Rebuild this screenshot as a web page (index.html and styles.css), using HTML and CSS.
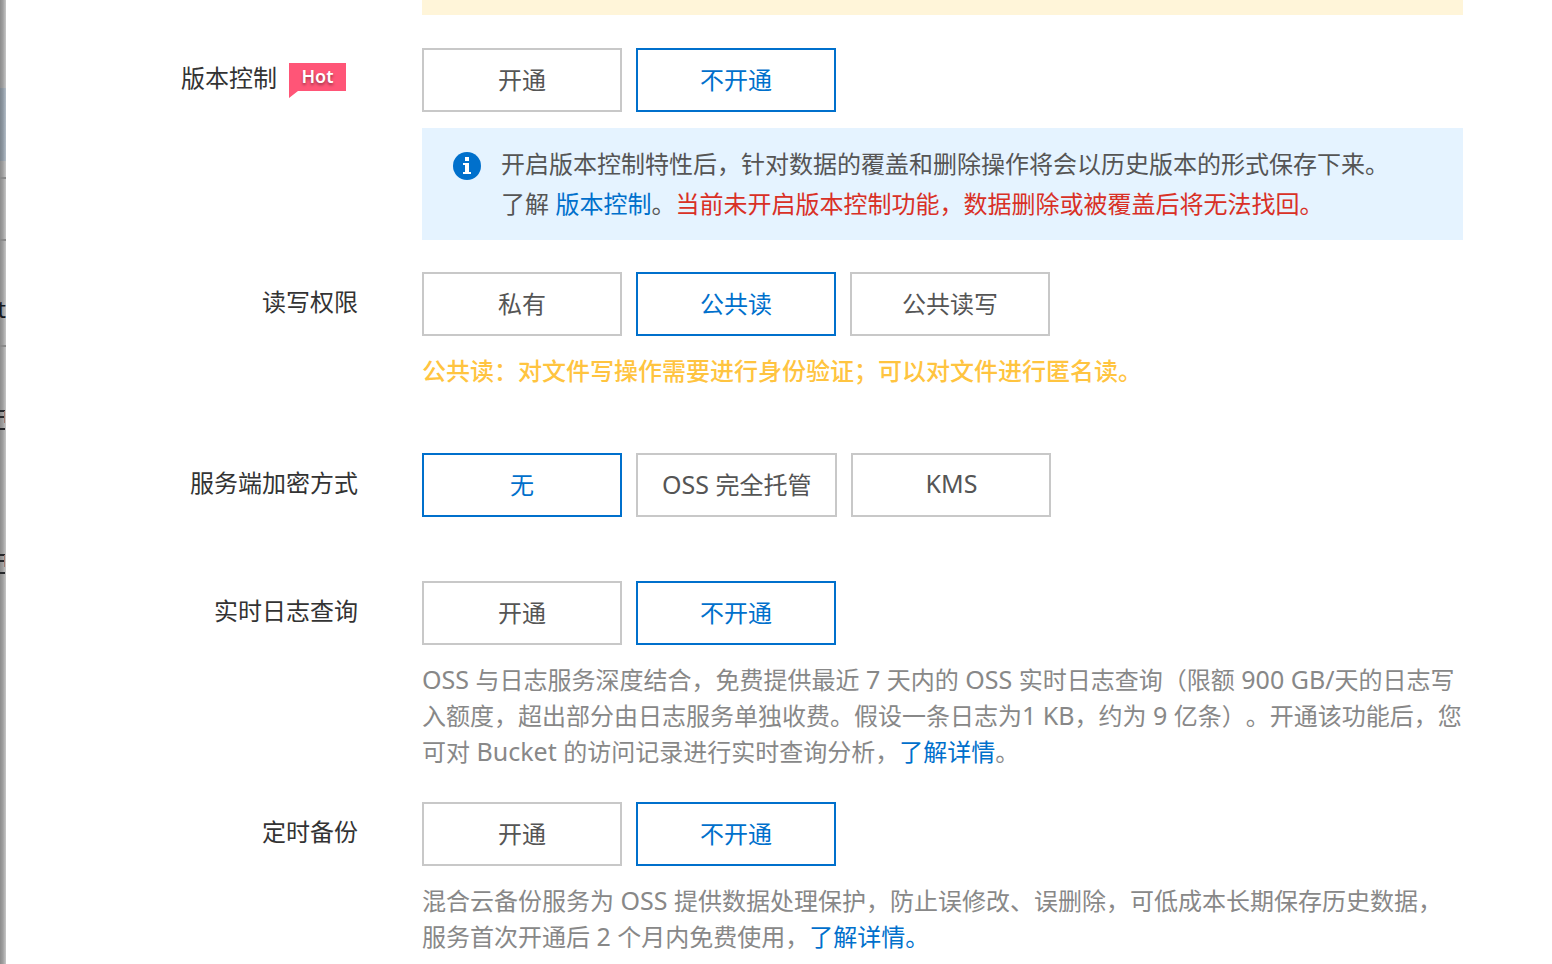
FILE: index.html
```
<!DOCTYPE html>
<html lang="zh-CN">
<head>
<meta charset="utf-8">
<title>创建 Bucket</title>
<link rel="stylesheet" href="styles.css">
</head>
<body>
<div class="backdrop" aria-hidden="true">
  <div class="backdrop-active"></div>
  <div class="backdrop-line"></div>
  <div class="backdrop-line backdrop-line-second"></div>
  <div class="backdrop-text">t</div>
  <div class="backdrop-line backdrop-line-third"></div>
  <svg class="backdrop-link" viewBox="0 0 6 22"><path d="M0 2H5M0 8H4M0 20H5" stroke="#26282c" stroke-width="2" fill="none"/><path d="M4.500 2V14" stroke="#a07a70" fill="none"/></svg>
  <svg class="backdrop-link backdrop-link-last" viewBox="0 0 6 22"><path d="M0 2H5M0 8H4M0 20H5" stroke="#26282c" stroke-width="2" fill="none"/><path d="M4.500 2V14" stroke="#a07a70" fill="none"/></svg>
</div>
<main class="drawer">
  <div class="warning"></div>

  <section class="field" role="group" aria-labelledby="l-version">
    <div class="label"><span id="l-version">版本控制</span><span class="hot"><svg class="hot-shape" viewBox="0 0 57 35" aria-hidden="true"><path d="M0 0H57V28H9L0 35Z" fill="#ff5577"/></svg><span class="hot-text">Hot</span></span></div>
    <div class="content">
      <div class="options">
        <button type="button" class="option">开通</button>
        <button type="button" class="option selected" aria-pressed="true">不开通</button>
      </div>
      <div class="notice">
        <svg class="info" viewBox="0 0 28 28" aria-hidden="true"><circle cx="14" cy="14" r="14" fill="#0070cc"/><path d="M12 5H16V9H12ZM10 11H16V20H18V22H10V20H12V13H10Z" fill="#fff"/></svg>
        <p class="notice-text">开启版本控制特性后，针对数据的覆盖和删除操作将会以历史版本的形式保存下来。<br>了解<span class="latin"> </span><a href="#">版本控制</a>。<span class="danger">当前未开启版本控制功能，数据删除或被覆盖后将无法找回。</span></p>
      </div>
    </div>
  </section>

  <section class="field field-loose" role="group" aria-labelledby="l-acl">
    <div class="label"><span id="l-acl">读写权限</span></div>
    <div class="content">
      <div class="options">
        <button type="button" class="option">私有</button>
        <button type="button" class="option selected" aria-pressed="true">公共读</button>
        <button type="button" class="option">公共读写</button>
      </div>
      <p class="hint hint-warn">公共读：对文件写操作需要进行身份验证；可以对文件进行匿名读。</p>
    </div>
  </section>

  <section class="field field-loose" role="group" aria-labelledby="l-enc">
    <div class="label"><span id="l-enc">服务端加密方式</span></div>
    <div class="content">
      <div class="options">
        <button type="button" class="option selected" aria-pressed="true">无</button>
        <button type="button" class="option"><span class="latin">OSS </span>完全托管</button>
        <button type="button" class="option"><span class="latin">KMS</span></button>
      </div>
    </div>
  </section>

  <section class="field" role="group" aria-labelledby="l-log">
    <div class="label"><span id="l-log">实时日志查询</span></div>
    <div class="content">
      <div class="options">
        <button type="button" class="option">开通</button>
        <button type="button" class="option selected" aria-pressed="true">不开通</button>
      </div>
      <p class="hint"><span class="latin">OSS </span>与日志服务深度结合，免费提供最近<span class="latin"> 7 </span>天内的<span class="latin"> OSS </span>实时日志查询（限额<span class="latin"> 900 GB/</span>天的日志写<br>入额度，超出部分由日志服务单独收费。假设一条日志为<span class="latin">1 KB</span>，约为<span class="latin"> 9 </span>亿条）。开通该功能后，您<br>可对<span class="latin"> Bucket </span>的访问记录进行实时查询分析，<a href="#">了解详情</a>。</p>
    </div>
  </section>

  <section class="field field-last" role="group" aria-labelledby="l-backup">
    <div class="label"><span id="l-backup">定时备份</span></div>
    <div class="content">
      <div class="options">
        <button type="button" class="option">开通</button>
        <button type="button" class="option selected" aria-pressed="true">不开通</button>
      </div>
      <p class="hint">混合云备份服务为<span class="latin"> OSS </span>提供数据处理保护，防止误修改、误删除，可低成本长期保存历史数据，<br>服务首次开通后<span class="latin"> 2 </span>个月内免费使用，<a href="#">了解详情。</a></p>
    </div>
  </section>
</main>
</body>
</html>
```
FILE: styles.css
```
* {
  box-sizing: border-box;
}

body {
  margin: 0;
  display: flex;
  min-height: 100vh;
  background: #fff;
  color: #333;
  font-family: "Noto Sans", "Noto Sans CJK SC", sans-serif;
  font-size: 24px;
  text-spacing-trim: space-all;
}

p {
  margin: 0;
}

a {
  color: #0070cc;
  text-decoration: none;
}

.latin {
  font-size: 25px;
  line-height: 1;
}

/* Sliver of the page behind the drawer */
.backdrop {
  flex: none;
  width: 6px;
  overflow: hidden;
  background: linear-gradient(to right, #8c8c8c, #a0a0a0 50%, #c8c8c8);
}

.backdrop-active {
  height: 73px;
  margin-top: 88px;
  background: linear-gradient(to right, #7c858e, #8e98a2 50%, #b4bec8);
}

.backdrop-line {
  height: 2px;
  margin-top: 16px;
  background: #8a8a8a;
}

.backdrop-line-second {
  margin-top: 60px;
}

.backdrop-line-third {
  margin-top: 24px;
}

.backdrop-text {
  display: flex;
  justify-content: flex-end;
  height: 24px;
  margin-top: 56px;
  color: #16181c;
  line-height: 24px;
}

.backdrop-link {
  display: block;
  width: 6px;
  height: 22px;
  margin-top: 62px;
}

.backdrop-link-last {
  margin-top: 122px;
}

.drawer {
  flex: 1;
  min-width: 0;
  padding-right: 89px;
}

.warning {
  height: 15px;
  margin: 0 0 33px 416px;
  background: #fff5d9;
}

.field {
  display: flex;
  gap: 64px;
  margin-bottom: 32px;
}

.field-loose {
  margin-bottom: 64px;
}

.field-last {
  margin-bottom: 0;
}

.label {
  flex: none;
  display: flex;
  justify-content: flex-end;
  align-items: center;
  width: 352px;
  height: 60px;
  line-height: 60px;
}

.content {
  flex: 1;
  min-width: 0;
}

.hot {
  display: grid;
  width: 57px;
  height: 35px;
  margin: 4px 12px 0;
}

.hot-shape,
.hot-text {
  grid-area: 1 / 1;
}

.hot-text {
  color: #fff;
  font-size: 18px;
  font-weight: 600;
  line-height: 27px;
  text-align: center;
  text-shadow: 0 2px 3px rgba(0, 0, 0, 0.4);
}

.options {
  display: flex;
  gap: 14px;
}

.option {
  min-width: 200px;
  height: 64px;
  padding: 0 24px 3px;
  border: 2px solid #c8c8c8;
  background: #fff;
  color: #555;
  font: inherit;
  white-space: nowrap;
}

.option.selected {
  border-color: #0070cc;
  color: #0070cc;
}

.notice {
  display: flex;
  gap: 20px;
  margin-top: 16px;
  padding: 16px 31px;
  background: #e5f3ff;
  color: #555;
  line-height: 40px;
}

.info {
  flex: none;
  width: 28px;
  height: 28px;
  margin-top: 8px;
}

.danger {
  color: #d93026;
}

.hint {
  margin-top: 17px;
  color: #888;
  line-height: 36px;
  white-space: nowrap;
}

.hint-warn {
  color: #ffc440;
  font-weight: 500;
}
```
